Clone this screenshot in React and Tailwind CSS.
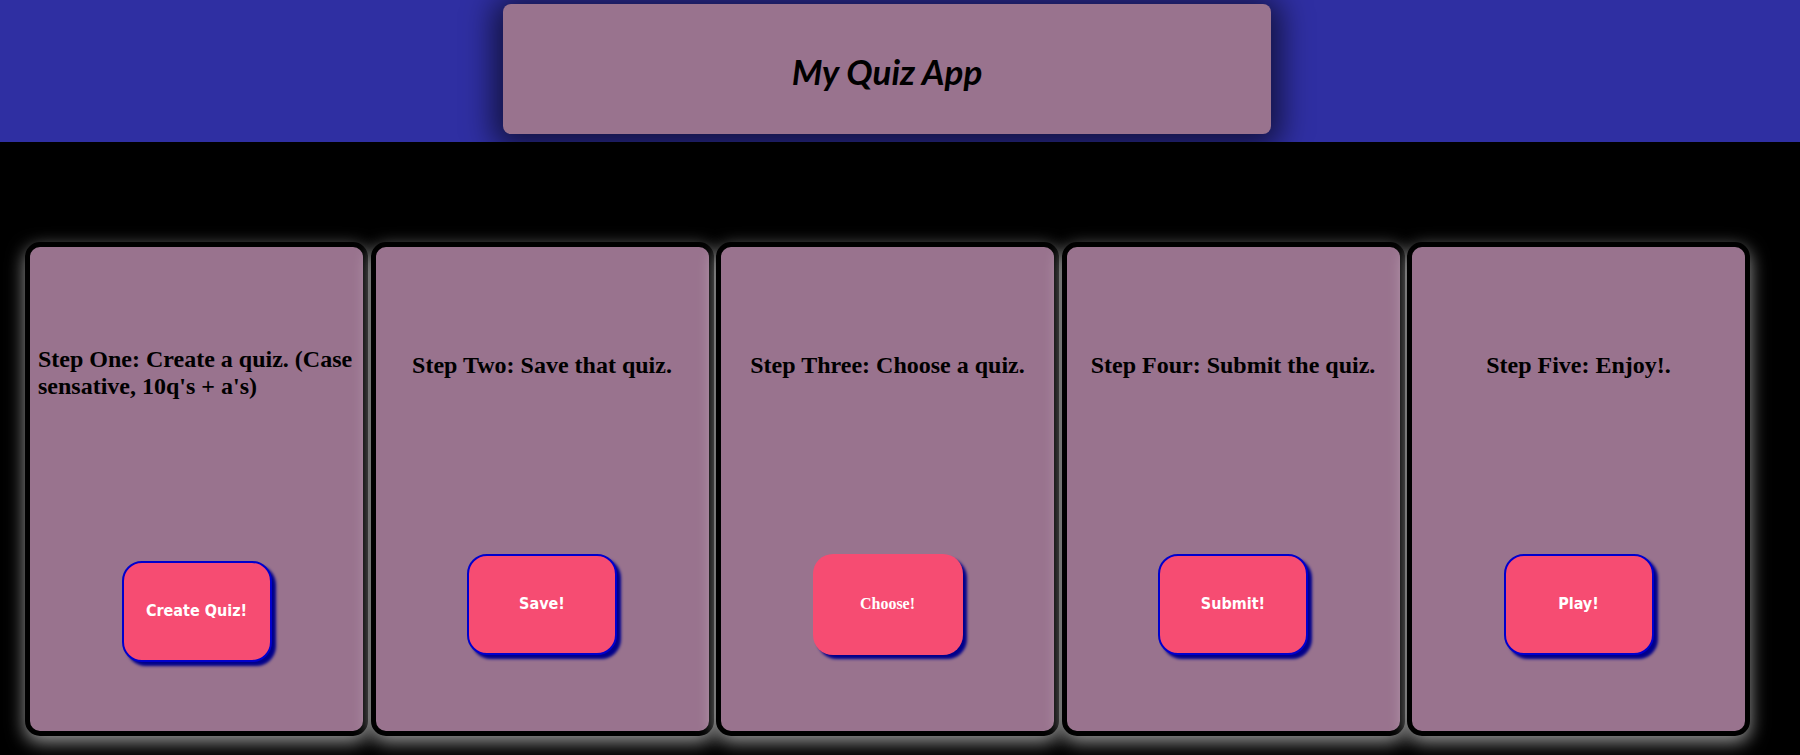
import React from "react";

const steps = [
  { text: "Step One: Create a quiz. (Case sensative, 10q's + a's)", label: "Create Quiz!" },
  { text: "Step Two: Save that quiz.", label: "Save!" },
  { text: "Step Three: Choose a quiz.", label: "Choose!", serif: true },
  { text: "Step Four: Submit the quiz.", label: "Submit!" },
  { text: "Step Five: Enjoy!.", label: "Play!" },
];

const StepCard = ({ step }) => {
  return (
    <div className="w-[343px] h-[494px] shrink-0 flex flex-col items-center justify-around pt-[18px] px-2 bg-[#99738e] border-[5px] border-black rounded-[15px] shadow-[0_6px_18px_rgba(255,255,255,0.6)]">
      <h2 className="text-[24px] leading-[normal] font-bold text-black font-['Liberation_Serif',serif]">
        {step.text}
      </h2>
      {step.serif ? (
        <button className="-mb-[11px] w-[150px] h-[101px] rounded-[20px] bg-[#f64c72] text-white text-[16px] font-bold font-['Liberation_Serif',serif] shadow-[4px_4px_3px_#00008b]">
          {step.label}
        </button>
      ) : (
        <button className="-mb-[11px] w-[150px] h-[101px] rounded-[20px] border-2 border-[#0000cd] bg-[#f64c72] text-white text-[16px] font-bold font-['DejaVu_Sans_Condensed','DejaVu_Sans',sans-serif] shadow-[4px_4px_3px_#00008b]">
          {step.label}
        </button>
      )}
    </div>
  );
};

const App = () => {
  return (
    <div className="min-h-screen bg-black">
      {/* Header */}
      <div className="h-[142px] bg-[#2f2fa2] pt-[4px] pl-[503px]">
        <div className="w-[768px] h-[130px] flex items-center justify-center bg-[#99738e] rounded-lg shadow-[0_4px_30px_10px_rgba(0,0,0,0.6)]">
          <h1 className="pt-[3px] text-[35px] leading-[normal] font-bold italic text-black font-['Comic_Sans_MS','Lato',sans-serif]">
            My Quiz App
          </h1>
        </div>
      </div>

      {/* Steps */}
      <div className="flex gap-[2.5px] pt-[100px] pl-[25px]">
        {steps.map((step) => (
          <StepCard key={step.label} step={step} />
        ))}
      </div>
    </div>
  );
};

export default App;
